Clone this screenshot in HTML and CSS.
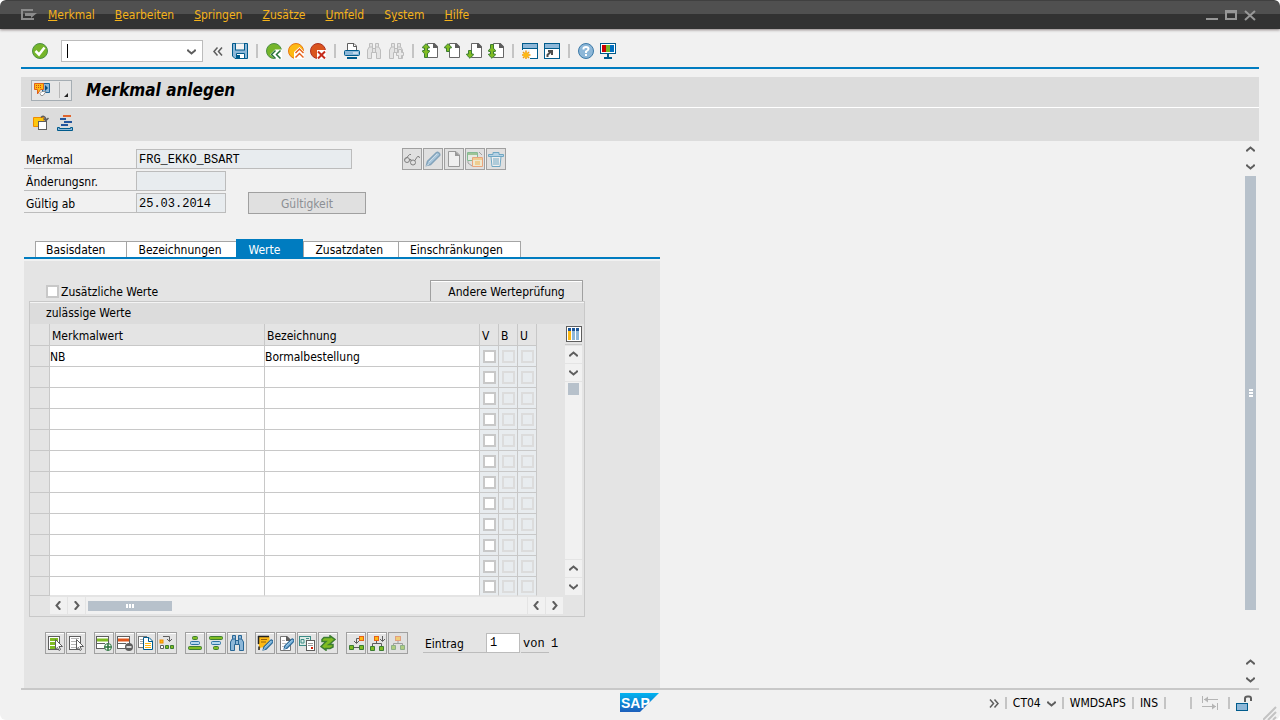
FILE: index.html
```html
<!DOCTYPE html>
<html lang="de">
<head>
<meta charset="UTF-8">
<title>Merkmal anlegen</title>
<link rel="stylesheet" href="styles.css">
</head>
<body>

<!-- shared icon shapes -->
<svg class="sprite" aria-hidden="true">
  <symbol id="up" viewBox="0 0 9 9"><path d="M1 6.5V5.5L4.5 2.5L8 5.5V6.5" fill="none" stroke="#5e5e5e" stroke-width="2"/></symbol>
  <symbol id="down" viewBox="0 0 9 9"><path d="M1 2.5V3.5L4.5 6.5L8 3.5V2.5" fill="none" stroke="#5e5e5e" stroke-width="2"/></symbol>
  <symbol id="left" viewBox="0 0 9 9"><path d="M6.5 1H5.5L2.5 4.5L5.5 8H6.5" fill="none" stroke="#5e5e5e" stroke-width="2"/></symbol>
  <symbol id="right" viewBox="0 0 9 9"><path d="M2.5 1H3.5L6.5 4.5L3.5 8H2.5" fill="none" stroke="#5e5e5e" stroke-width="2"/></symbol>
  <symbol id="page" viewBox="0 0 16 16">
    <path d="M5.500 .5H12L15.500 4V14.500H5.500Z" fill="#fff" stroke="#666"/>
    <path d="M11 0H12.500L16 3.500V5H11Z" fill="#5e5e5e"/>
  </symbol>
  <symbol id="arrow" viewBox="0 0 8 9">
    <path d="M4 .7L7.300 4V5H5.500V8.500H2.500V5H.7V4Z" fill="#80bc22" stroke="#3c7d32"/>
  </symbol>
  <symbol id="bothways" viewBox="0 0 8 16">
    <path d="M4 .7L7.300 4V5H5.500V7.500H7.300V9L5.500 10.500V14.500H2.500V10.500L.7 9V7.500H2.500V5H.7V4Z" fill="#80bc22" stroke="#3c7d32"/>
  </symbol>
  <symbol id="binoculars" viewBox="0 0 16 16">
    <path d="M3.500 .5H6.500V5.500H9.500V.5H12.500V3.500L14.500 7V15.500H10.500V9.500H5.500V15.500H1.500V7L3.500 3.500Z" fill="var(--fill)" stroke="var(--line)"/>
    <path d="M3 4H6.500M9.500 4H13M6.500 5V9M9.500 5V9" stroke="var(--line)"/>
  </symbol>
  <symbol id="window" viewBox="0 0 16 16">
    <rect x=".5" y=".5" width="15" height="15" fill="#fff" stroke="#005b8c"/>
    <rect x="1" y="1" width="14" height="4" fill="#8db7d8"/>
    <path d="M0 5.500H16" stroke="#005b8c"/>
  </symbol>
  <symbol id="list" viewBox="0 0 16 16">
    <rect x="1.500" y="1.500" width="11" height="13" fill="#fff" stroke="#5e5e5e"/>
  </symbol>
  <symbol id="pencil" viewBox="0 0 16 16">
    <path d="M1.500 14.500L2.500 10.500L11.500 1.500C13 .5 15.500 3 14.500 4.500L5.500 13.500Z" fill="#75b0d9" stroke="#286796" stroke-width="1.500"/>
    <path d="M4 11L12 3M1.500 14.500L4 13" stroke="#c2def0"/>
  </symbol>
</svg>

<header class="menubar">
  <button class="sysmenu" aria-label="Systemmenü">
    <svg width="16" height="12" viewBox="0 0 16 12"><path d="M12 1H1V10H12V9" fill="none" stroke="#8b8b8b" stroke-width="2"/><path d="M4 4H16L10 9V7H4Z" fill="#8b8b8b"/></svg>
  </button>
  <nav class="menus">
    <button><u>M</u>erkmal</button>
    <button><u>B</u>earbeiten</button>
    <button><u>S</u>pringen</button>
    <button><u>Z</u>usätze</button>
    <button><u>U</u>mfeld</button>
    <button>S<u>y</u>stem</button>
    <button><u>H</u>ilfe</button>
  </nav>
  <div class="winctl">
    <button aria-label="Minimieren"><svg width="12" height="12" viewBox="0 0 12 12"><path d="M0 10H12" stroke="#979797" stroke-width="2"/></svg></button>
    <button aria-label="Maximieren"><svg width="12" height="12" viewBox="0 0 12 12"><path d="M0 2H12M0 10H12M1 2V11M11 2V11" stroke="#979797" stroke-width="2"/><path d="M0 1H12V4H0Z" fill="#979797"/></svg></button>
    <button aria-label="Schließen"><svg width="12" height="12" viewBox="0 0 12 12"><path d="M1 2L11 11M11 2L1 11" stroke="#979797" stroke-width="2"/></svg></button>
  </div>
</header>

<div class="toolbar">
  <button aria-label="Weiter"><svg class="icon" viewBox="0 0 16 16"><circle cx="8" cy="8" r="7.500" fill="#76b52a" stroke="#4d8f45"/><path d="M3.500 8L7 11.500L12.500 4.500" fill="none" stroke="#fff" stroke-width="2.500"/></svg></button>
  <div class="command">
    <input type="text" aria-label="Befehl">
    <button aria-label="Befehlsliste"><svg class="chev" viewBox="0 0 9 9"><use href="#down"/></svg></button>
  </div>
  <button class="collapse" aria-label="Einklappen"><svg width="10" height="9" viewBox="0 0 10 9"><path d="M4.500 .5L1 4.500L4.500 8.500M9 .5L5.500 4.500L9 8.500" fill="none" stroke="#5e5e5e" stroke-width="1.500"/></svg></button>
  <button aria-label="Sichern"><svg class="icon" viewBox="0 0 16 16"><path d="M.5 .5H15.500V15.500H3L.5 13Z" fill="#8db7d8" stroke="#005b8c"/><rect x="3.500" y="0" width="9" height="7" fill="#f4f4f4" stroke="#005b8c"/><path d="M4.500 15V10.500H12.500V15" fill="#fff" stroke="#005b8c"/><path d="M5 12H8V15H5Z" fill="#005b8c"/></svg></button>
  <i class="sep"></i>
  <button aria-label="Zurück"><svg class="icon" viewBox="0 0 16 16"><circle cx="8" cy="8" r="7.500" fill="#76b52a" stroke="#4d8f45"/><path d="M4 11.500L9 6.500H16V16H9Z" fill="#fff"/><path d="M9.500 7.500L5.500 11.500L9.500 15.500M14.500 7.500L10.500 11.500L14.500 15.500" fill="none" stroke="#27713a" stroke-width="1.500"/></svg></button>
  <button aria-label="Beenden"><svg class="icon" viewBox="0 0 16 16"><circle cx="8" cy="8" r="7.500" fill="#fdb913" stroke="#e87511"/><path d="M6 9L11.500 4L16 8.500V16H6Z" fill="#fff"/><path d="M7.500 10L11.500 6L15.500 10M7.500 14.500L11.500 10.500L15.500 14.500" fill="none" stroke="#e5601b" stroke-width="1.500"/></svg></button>
  <button aria-label="Abbrechen"><svg class="icon" viewBox="0 0 16 16"><circle cx="8" cy="8" r="7.500" fill="#d9541e" stroke="#ad3022"/><path d="M7 7H16V16H7Z" fill="#fff"/><path d="M8 8.500L15 15.500M15 8.500L8 15.500" stroke="#c52b1c" stroke-width="2"/></svg></button>
  <i class="sep"></i>
  <button aria-label="Drucken"><svg class="icon" viewBox="0 0 16 16"><path d="M3.500 7V.5H10L12.500 3V7" fill="#fff" stroke="#5e5e5e"/><path d="M9.500 1V3.500H12" fill="none" stroke="#5e5e5e"/><rect x=".5" y="7.500" width="15" height="5" rx="1" fill="#8db7d8" stroke="#005b8c"/><path d="M9 10H14" stroke="#fff"/><path d="M3 15H13" stroke="#005b8c" stroke-width="2"/></svg></button>
  <button aria-label="Suchen" disabled><svg class="icon gray" viewBox="0 0 16 16"><use href="#binoculars"/></svg></button>
  <button aria-label="Weitersuchen" disabled><svg class="icon gray" viewBox="0 0 16 16"><use href="#binoculars"/><path d="M10.500 6.500H13.500V9.500H15.500V12.500H13.500V15.500H10.500V12.500H8.500V9.500H10.500Z" fill="#e9e9e9" stroke="#bdbdbd"/></svg></button>
  <i class="sep"></i>
  <button aria-label="Erste Seite"><svg class="icon" viewBox="0 0 16 16"><use href="#page" width="16" height="16"/><use href="#bothways" width="8" height="16"/></svg></button>
  <button aria-label="Vorige Seite"><svg class="icon" viewBox="0 0 16 16"><use href="#page" width="16" height="16"/><use href="#arrow" width="8" height="9"/></svg></button>
  <button aria-label="Nächste Seite"><svg class="icon" viewBox="0 0 16 16"><use href="#page" width="16" height="16"/><use href="#arrow" width="8" height="9" transform="translate(0 16) scale(1 -1)"/></svg></button>
  <button aria-label="Letzte Seite"><svg class="icon" viewBox="0 0 16 16"><use href="#page" width="16" height="16"/><use href="#bothways" width="8" height="16" transform="translate(0 16) scale(1 -1)"/></svg></button>
  <i class="sep"></i>
  <button aria-label="Neuer Modus"><svg class="icon" viewBox="0 0 16 16"><use href="#window"/><path d="M0 7H8V16H0Z" fill="#f1f1f1"/><path d="M4 7.500V16M0 12H8.500M1 9L7 15M7 9L1 15" stroke="#f39c12" stroke-width="1.500"/><circle cx="4" cy="12" r="2.500" fill="#fdb913"/></svg></button>
  <button aria-label="Verknüpfung"><svg class="icon" viewBox="0 0 16 16"><use href="#window"/><path d="M3.500 14V12L7 8.500M4 8H8V12" fill="none" stroke="#4d4d4d" stroke-width="2"/></svg></button>
  <i class="sep"></i>
  <button aria-label="Hilfe"><svg class="icon" viewBox="0 0 16 16"><circle cx="8" cy="8" r="7.500" fill="#8db7d8" stroke="#3c7aa8"/><path d="M5.500 6.500V5.500Q5.500 4 8 4T10.500 6Q10.500 7 8 8.500V10" fill="none" stroke="#fff" stroke-width="2"/><path d="M7 11H9V13H7Z" fill="#fff"/></svg></button>
  <button aria-label="Layout anpassen"><svg class="icon" viewBox="0 0 16 16"><rect x=".5" y=".5" width="15" height="10" fill="#fff" stroke="#005b8c"/><path d="M2 2H6V9H2Z" fill="#c00"/><path d="M6 2H10V9H6Z" fill="#76b52a"/><path d="M10 2H14V9H10Z" fill="#0070c0"/><path d="M7 11H9V14H7ZM4 14H12V16H4Z" fill="#005b8c"/></svg></button>
</div>

<div class="titlebar">
  <button class="services" aria-label="Dienste zum Objekt">
    <svg class="icon" viewBox="0 0 16 16"><path d="M8.500 1.500H15.500V10.500H8.500Z" fill="#8db7d8" stroke="#1d6499"/><path d="M11 3L14 6L11 9Z" fill="#0a4b7c"/><path d="M.5 1.500H9.500V7.500H6.500L3.500 12V7.500H.5Z" fill="#fdb913" stroke="#e0601a"/><path d="M2 3.500H8M2 5.500H8" stroke="#d2421b" stroke-dasharray="1 1"/><path d="M6 11.500L8 9.500H12L9 13.500H7Z" fill="#fff" stroke="#777" stroke-width=".7"/></svg>
    <svg class="corner" width="10" height="16" viewBox="0 0 10 16"><path d="M.5 0V16" stroke="#b8b8b8"/><path d="M9 11V15H5Z" fill="#222"/></svg>
  </button>
  <h1>Merkmal anlegen</h1>
</div>
<div class="apptools">
  <button aria-label="Kopieren"><svg class="icon" viewBox="0 0 16 16"><path d="M.5 2.500H11V11.500H.5Z" fill="#fdc70e" stroke="#f08a00"/><rect x="5.500" y="6.500" width="8" height="8" fill="#fff" stroke="#5e5e5e"/><path d="M8 2.500Q11 -.5 13 4M10.500 3.500L13 5.500L15.500 3" fill="none" stroke="#5e5e5e" stroke-width="1.500"/></svg></button>
  <button aria-label="Klassenhierarchie"><svg class="icon" viewBox="0 0 16 16"><path d="M6 1H14" stroke="#e0642c" stroke-width="2"/><path d="M3 4H9M7 7H15M4 10H11" stroke="#23559c" stroke-width="2"/><path d="M.5 12.500H2.500V13.500H13.500V12.500H15.500V15.500H.5Z" fill="#8db7d8" stroke="#005b8c"/></svg></button>
</div>

<main>
  <div class="content">
    <div class="form">
      <div class="row">
        <label for="merkmal">Merkmal</label><input class="long" id="merkmal" value="FRG_EKKO_BSART" readonly>
        <div class="group modes">
          <button class="tool" disabled aria-label="Anzeigen"><svg class="icon" viewBox="0 0 16 16"><g fill="none" stroke="#222"><path d="M1 8.500L5.500 3.500H7M10.500 10L13.500 5.500H15L15.500 7"/><circle cx="3" cy="9" r="2.500"/><circle cx="9" cy="11.500" r="2.500"/><path d="M5 8.500H7V10"/></g></svg></button>
          <button class="tool" disabled aria-label="Ändern"><svg class="icon" viewBox="0 0 16 16"><use href="#pencil"/></svg></button>
          <button class="tool" disabled aria-label="Anlegen"><svg class="icon" viewBox="0 0 16 16"><path d="M2.500 .5H10L13.500 4V15.500H2.500Z" fill="#fff" stroke="#555"/><path d="M9 0L14 5H9Z" fill="#555"/></svg></button>
          <button class="tool" disabled aria-label="Anlegen mit Vorlage"><svg class="icon" viewBox="0 0 16 16"><path d="M.5 1.500H10.500V9.500H.5Z" fill="#eaf5e5" stroke="#2b9348"/><path d="M1 2H10V4H1Z" fill="#5faa4e"/><path d="M12 1L15 4M1 10V12L5 15" fill="none" stroke="#666"/><path d="M5.500 6.500H15.500V15.500H5.500Z" fill="#fff0c0" stroke="#f26a1b"/><path d="M6 8H15M8 11H13M8 13H13" stroke="#fbab18" stroke-width="1.500"/></svg></button>
          <button class="tool" disabled aria-label="Löschen"><svg class="icon" viewBox="0 0 16 16"><path d="M3 5.500H13L12 15.500H4Z" fill="#fff" stroke="#0070a8"/><path d="M6 7V14M8 7V14M10 7V14" stroke="#0070a8"/><path d="M.5 3.500H5V1.500H11V3.500H15.500V5.500H.5Z" fill="#8cc6ea" stroke="#0070a8"/></svg></button>
        </div>
      </div>
      <div class="row">
        <label for="aenderung">Änderungsnr.</label><input id="aenderung" readonly>
      </div>
      <div class="row">
        <label for="gueltig">Gültig ab</label><input id="gueltig" value="25.03.2014" readonly>
        <button class="push validity" disabled>Gültigkeit</button>
      </div>
    </div>

    <div class="tabs" role="tablist">
      <button role="tab">Basisdaten</button>
      <button role="tab">Bezeichnungen</button>
      <button role="tab" class="active" aria-selected="true">Werte</button>
      <button role="tab">Zusatzdaten</button>
      <button role="tab">Einschränkungen</button>
    </div>

    <section class="panel">
      <div class="panelhead">
        <label class="check"><input type="checkbox">Zusätzliche Werte</label>
        <button class="push other">Andere Werteprüfung</button>
      </div>

      <div class="box">
        <h2>zulässige Werte</h2>
        <div class="gridwrap">
          <table>
            <colgroup><col class="sel"><col><col><col class="flag"><col class="flag"><col class="flag"></colgroup>
            <thead>
              <tr><th></th><th>Merkmalwert</th><th>Bezeichnung</th><th>V</th><th>B</th><th>U</th></tr>
            </thead>
            <tbody id="werte"></tbody>
          </table>
          <div class="vscroll">
            <button class="config" aria-label="Konfiguration"><svg width="16" height="16" viewBox="0 0 16 16"><rect x=".5" y=".5" width="15" height="15" fill="#fff" stroke="#5e5e5e"/><path d="M2 2H5V5H2ZM6 2H9V5H6ZM10 2H13V5H10Z" fill="#1d5799"/><path d="M2 5H5V14H2Z" fill="#fdb913"/><path d="M6 5H9V14H6ZM10 5H13V14H10Z" fill="#8db7d8"/></svg></button>
            <button aria-label="Nach oben"><svg class="chev" viewBox="0 0 9 9"><use href="#up"/></svg></button>
            <button aria-label="Nach unten"><svg class="chev" viewBox="0 0 9 9"><use href="#down"/></svg></button>
            <div class="track"><div class="thumb"></div></div>
            <button aria-label="Nach oben"><svg class="chev" viewBox="0 0 9 9"><use href="#up"/></svg></button>
            <button aria-label="Nach unten"><svg class="chev" viewBox="0 0 9 9"><use href="#down"/></svg></button>
          </div>
        </div>
        <div class="hscroll">
          <button aria-label="Nach links"><svg class="chev" viewBox="0 0 9 9"><use href="#left"/></svg></button>
          <button aria-label="Nach rechts"><svg class="chev" viewBox="0 0 9 9"><use href="#right"/></svg></button>
          <div class="track"><div class="thumb"><i></i><i></i><i></i></div></div>
          <button aria-label="Nach links"><svg class="chev" viewBox="0 0 9 9"><use href="#left"/></svg></button>
          <button aria-label="Nach rechts"><svg class="chev" viewBox="0 0 9 9"><use href="#right"/></svg></button>
        </div>
      </div>

      <div class="tabletools">
        <div class="group">
          <button class="tool" aria-label="Alle markieren"><svg class="icon" viewBox="0 0 16 16"><use href="#list"/><path d="M3 4.500H11M3 8.500H8M3 12.500H9" stroke="#80bc22" stroke-width="3"/><path d="M8.500 4.500L15.500 11.500H12L13.500 14.500L12 15.500L10.500 12.500L8.500 14Z" fill="#fff" stroke="#5e5e5e"/></svg></button>
          <button class="tool" aria-label="Markierung löschen"><svg class="icon" viewBox="0 0 16 16"><use href="#list"/><path d="M3 3.500H11M3 6.500H8M3 9.500H8M3 12.500H8" stroke="#b5b5b5"/><path d="M8.500 4.500L15.500 11.500H12L13.500 14.500L12 15.500L10.500 12.500L8.500 14Z" fill="#fff" stroke="#5e5e5e"/></svg></button>
        </div>
        <div class="group">
          <button class="tool" aria-label="Zeile einfügen"><svg class="icon" viewBox="0 0 16 16"><rect x=".5" y="1.500" width="12" height="12" fill="#fff" stroke="#5e5e5e"/><path d="M1 5H12" stroke="#80bc22" stroke-width="3"/><path d="M0 8.500H9" stroke="#5e5e5e"/><circle cx="12" cy="12" r="3.500" fill="#fff" stroke="#27713a"/><path d="M12 9V15M9 12H15" stroke="#27713a" stroke-width="1.500"/></svg></button>
          <button class="tool" aria-label="Zeile löschen"><svg class="icon" viewBox="0 0 16 16"><rect x=".5" y="1.500" width="12" height="12" fill="#fff" stroke="#5e5e5e"/><path d="M1 5H12" stroke="#e0571c" stroke-width="3"/><path d="M0 8.500H9" stroke="#5e5e5e"/><circle cx="12" cy="12" r="4" fill="#5e5e5e"/><path d="M9.500 12H14.500" stroke="#fff" stroke-width="1.500"/></svg></button>
          <button class="tool" aria-label="Zeile kopieren"><svg class="icon" viewBox="0 0 16 16"><rect x=".5" y="1.500" width="8" height="11" fill="#fff" stroke="#777"/><path d="M2 4.500H5M2 6.500H5M2 8.500H5" stroke="#aaa"/><path d="M5.500 2.500H11L14.500 6V14.500H5.500Z" fill="#fff" stroke="#005b8c"/><path d="M10.500 3V6.500H14" fill="none" stroke="#005b8c"/><path d="M7 8.500H13M7 10.500H13M7 12.500H13" stroke="#fdb913"/></svg></button>
          <button class="tool" aria-label="Umordnen"><svg class="icon" viewBox="0 0 16 16"><rect x="1" y="5" width="3" height="3" fill="#fdb913" stroke="#f08a00"/><path d="M4 1.500H10.500V6M8 4L10.500 6.500L13 4" fill="none" stroke="#5e5e5e"/><path d="M1.500 10.500H4.500V13.500H1.500Z" fill="#fff" stroke="#5e5e5e"/><path d="M6.500 10.500H9.500V13.500H6.500ZM11.500 10.500H14.500V13.500H11.500Z" fill="#80bc22" stroke="#3c7d32"/></svg></button>
        </div>
        <div class="group">
          <button class="tool" aria-label="Aufsteigend sortieren"><svg class="icon" viewBox="0 0 16 16"><rect x="5.500" y="1.500" width="5" height="3" rx="1" fill="#80bc22" stroke="#3c7d32"/><rect x="3.500" y="6.500" width="9" height="3" rx="1" fill="#b6d8ed" stroke="#2b73a5"/><rect x="1.500" y="11.500" width="13" height="3" rx="1" fill="#80bc22" stroke="#3c7d32"/></svg></button>
          <button class="tool" aria-label="Absteigend sortieren"><svg class="icon" viewBox="0 0 16 16"><rect x="1.500" y="1.500" width="13" height="3" rx="1" fill="#80bc22" stroke="#3c7d32"/><rect x="3.500" y="6.500" width="9" height="3" rx="1" fill="#b6d8ed" stroke="#2b73a5"/><rect x="5.500" y="11.500" width="5" height="3" rx="1" fill="#80bc22" stroke="#3c7d32"/></svg></button>
          <button class="tool" aria-label="Wert suchen"><svg class="icon blue" viewBox="0 0 16 16"><use href="#binoculars"/></svg></button>
        </div>
        <div class="group">
          <button class="tool" aria-label="Langtext"><svg class="icon" viewBox="0 0 16 16"><path d="M1.500 1.500H12.500V8.500L8 12.500H4L2 14.500V9.500H1Z" fill="#fdb913"/><path d="M1 1.500H12M1.500 1V9M2 11.500V15" stroke="#222" stroke-width="1.500"/><path d="M4 4.500H10M4 7H9" stroke="#9a6408"/><use href="#pencil" x="5" y="4" width="12" height="12"/></svg></button>
          <button class="tool" aria-label="Bezeichnungen ändern"><svg class="icon" viewBox="0 0 16 16"><path d="M2.500 1.500H9L12.500 5V15.500H2.500Z" fill="#fff" stroke="#777"/><path d="M8 1H9L13 5V6H8Z" fill="#5e5e5e"/><path d="M4 5.500H7M4 8.500H8M4 11.500H7" stroke="#bbb"/><use href="#pencil" x="5" y="3" width="12" height="12"/></svg></button>
          <button class="tool" aria-label="Dokumente"><svg class="icon" viewBox="0 0 16 16"><rect x=".5" y="1.500" width="11" height="9" fill="#ddebe6" stroke="#3c8c86"/><path d="M2 4.500H5V8H2ZM7 3.500H10M7 5.500H10" fill="none" stroke="#3c8c86"/><rect x="7.500" y="5.500" width="8" height="10" fill="#fff" stroke="#5e5e5e"/><path d="M9 8.500H14M9 10.500H14" stroke="#999"/><path d="M12 12H14V14H12Z" fill="#d81e05"/></svg></button>
          <button class="tool" aria-label="Wechseln"><svg class="icon" viewBox="0 0 16 16"><path d="M2 4.500L4 2.500H10V.8L15 4.500L10.500 8.500L9 9.500H13V12L10 13.500H6V15.200L1 11.500L5 7.500L6 6.500H2Z" fill="#80bc22" stroke="#3c7d32" stroke-width="1.500"/></svg></button>
        </div>
        <div class="group">
          <button class="tool" aria-label="Ebene tiefer"><svg class="icon" viewBox="0 0 16 16"><rect x="11.500" y="1.500" width="4" height="4" fill="#fdb913" stroke="#e5601b"/><path d="M11 3.500H8.500V8M6 6L8.500 8.500L11 6M5 12.500H11" fill="none" stroke="#5e5e5e"/><path d="M1.500 10.500H5.500V14.500H1.500ZM11.500 10.500H15.500V14.500H11.500Z" fill="#80bc22" stroke="#3c7d32"/></svg></button>
          <button class="tool" aria-label="Hierarchie"><svg class="icon" viewBox="0 0 16 16"><path d="M3.500 11V8.500H12.500V11M7.500 5V8.500M13.500 1V6M11 4L13.500 6.500L16 4" fill="none" stroke="#5e5e5e"/><rect x="5.500" y="1.500" width="4" height="4" fill="#fdb913" stroke="#e5601b"/><path d="M1.500 11.500H5.500V15.500H1.500ZM10.500 11.500H14.500V15.500H10.500Z" fill="#80bc22" stroke="#3c7d32"/></svg></button>
          <button class="tool" disabled aria-label="Hierarchie löschen"><svg class="icon" viewBox="0 0 16 16"><path d="M3.500 11V8.500H12.500V11M8 5V8.500" fill="none" stroke="#5e5e5e"/><rect x="5.500" y="1.500" width="5" height="4" fill="#fdb913" stroke="#e5601b"/><path d="M1.500 10.500H5.500V14.500H1.500ZM10.500 10.500H14.500V14.500H10.500Z" fill="#80bc22" stroke="#3c7d32"/></svg></button>
        </div>
        <div class="entry">
          <label for="eintrag">Eintrag</label><input id="eintrag" value="1"><span class="of">von</span><span class="total">1</span>
        </div>
      </div>
    </section>
  </div>

  <div class="pagescroll">
    <button aria-label="Nach oben"><svg class="chev" viewBox="0 0 9 9"><use href="#up"/></svg></button>
    <button aria-label="Nach unten"><svg class="chev" viewBox="0 0 9 9"><use href="#down"/></svg></button>
    <div class="track"><div class="thumb"><i></i><i></i><i></i></div></div>
    <button aria-label="Nach oben"><svg class="chev" viewBox="0 0 9 9"><use href="#up"/></svg></button>
    <button aria-label="Nach unten"><svg class="chev" viewBox="0 0 9 9"><use href="#down"/></svg></button>
  </div>
</main>

<footer>
  <svg class="logo" width="39" height="19" viewBox="0 0 39 19" role="img" aria-label="SAP">
    <defs><linearGradient id="sap" x2="0" y2="1"><stop offset="0" stop-color="#00b3f0"/><stop offset="1" stop-color="#1e5fbb"/></linearGradient></defs>
    <path d="M0 0H39L20 19H0Z" fill="url(#sap)"/>
    <text x="1" y="15">SAP</text>
  </svg>
  <div class="status">
    <svg class="more" width="10" height="9" viewBox="0 0 10 9"><path d="M1 .5L4.500 4.500L1 8.500M5.500 .5L9 4.500L5.500 8.500" fill="none" stroke="#5e5e5e" stroke-width="1.500"/></svg>
    <i class="sep"></i>
    <button>CT04 <svg class="chev" viewBox="0 0 9 9"><use href="#down"/></svg></button>
    <i class="sep"></i>
    <span>WMDSAPS</span>
    <i class="sep"></i>
    <span>INS</span>
    <i class="sep"></i>
    <span class="empty"></span>
    <i class="sep"></i>
    <svg class="icon tabkey" viewBox="0 0 16 16"><path d="M.5 1V8M15.500 8V15M2 4.500H16M0 11.500H14" stroke="#b5b5b5"/><path d="M6 1.500L2 4.500L6 7.500ZM10 8.500L14 11.500L10 14.500Z" fill="#b5b5b5"/></svg>
    <i class="sep"></i>
    <svg class="icon" viewBox="0 0 16 16"><path d="M9 7V3.500Q9 1.500 11.500 1.500H13Q15 1.500 15 3.500V6" fill="none" stroke="#5e5e5e" stroke-width="2"/><rect x=".5" y="8.500" width="11" height="7" fill="#8db7d8" stroke="#005b8c"/></svg>
  </div>
  <svg class="grip" width="14" height="14" viewBox="0 0 14 14"><path d="M0 14L13 1M5 14L13 6M10 14L13 11" stroke="#c3c3c3" stroke-width="2"/></svg>
</footer>

<script>
// Wertetabelle aufbauen
const werte = [['NB', 'Bormalbestellung']];
const tbody = document.getElementById('werte');

for (let i = 0; i < 12; i++) {
  const [wert, bez] = werte[i] || ['', ''];
  const tr = document.createElement('tr');
  tr.innerHTML =
    '<td></td>' +
    `<td><input type="text" aria-label="Merkmalwert ${i + 1}" value="${wert}"></td>` +
    `<td><input type="text" aria-label="Bezeichnung ${i + 1}" value="${bez}"></td>` +
    '<td><input type="checkbox" aria-label="V"></td>' +
    '<td><input type="checkbox" aria-label="B" disabled></td>' +
    '<td><input type="checkbox" aria-label="U" disabled></td>';
  tbody.appendChild(tr);
}
</script>
</body>
</html>
```

FILE: styles.css
```css
* {
  box-sizing: border-box;
}
html {
  background: #fff;
}
body {
  margin: 0;
  min-height: 100vh;
  display: flex;
  flex-direction: column;
  background: #f1f1f1;
  border-radius: 6px;
  font: 12px/16px "DejaVu Sans Condensed", "DejaVu Sans", sans-serif;
  color: #000;
}
button, input {
  font: inherit;
  color: inherit;
  margin: 0;
  padding: 0;
  border: 0;
  background: none;
  border-radius: 0;
}
button {
  white-space: nowrap;
}
svg {
  display: block;
  flex: none;
}
.sprite {
  display: none;
}
.icon {
  width: 16px;
  height: 16px;
}
.chev {
  width: 9px;
  height: 9px;
}
.gray {
  --fill: #e4e4e4;
  --line: #bdbdbd;
}
.blue {
  --fill: #8db7d8;
  --line: #286796;
}
.sep {
  width: 2px;
  height: 14px;
  background: #c4c4c4;
}

/* menu bar */
.menubar {
  display: flex;
  align-items: center;
  height: 29px;
  padding: 0 24px 0 21px;
  border-radius: 5px 5px 0 0;
  border-top: 1px solid #404040;
  background: linear-gradient(#505050 13px, #323232 13px);
  box-shadow: 0 1px 3px #8a8080;
}
.menus {
  display: flex;
  gap: 20px;
  margin-left: 11px;
  color: #f5b31b;
}
.winctl {
  display: flex;
  gap: 7px;
  margin-left: auto;
}

/* system toolbar */
.toolbar {
  display: flex;
  align-items: center;
  gap: 6px;
  height: 40px;
  margin: 0 21px;
  padding: 6px 11px 0;
  border-bottom: 2px solid #007cc0;
}
.toolbar .sep {
  margin: 0 2px;
}
.command {
  position: relative;
  display: flex;
  align-items: center;
  width: 142px;
  height: 22px;
  margin-left: 7px;
  padding: 0 6px 0 5px;
  border: 1px solid #bcbcbc;
  background: #fff;
}
.command::before {
  content: "";
  width: 1px;
  height: 14px;
  background: #000;
}
.command input {
  flex: 1;
  min-width: 0;
  outline: 0;
}
.collapse {
  margin: 0 3px 0 4px;
}

/* title and application toolbar */
.titlebar, .apptools {
  display: flex;
  align-items: center;
  margin: 0 21px;
  padding: 0 10px;
  background: #dcdcdc;
}
.titlebar {
  height: 31px;
  margin-top: 8px;
  padding-bottom: 4px;
  border-bottom: 1px solid #fff;
}
.services {
  display: flex;
  justify-content: space-between;
  width: 41px;
  height: 21px;
  padding: 1px 2px;
  border: 1px solid #a5adb3;
  background: #e6e6e6;
}
.titlebar h1 {
  margin: 0 0 0 14px;
  font-size: 17px;
  line-height: 20px;
  font-style: italic;
}
.apptools {
  height: 33px;
  gap: 8px;
  padding: 0 12px 4px;
}

main {
  flex: 1;
  display: flex;
  justify-content: space-between;
  margin: 0 21px;
  border-bottom: 2px solid #c8c8c8;
}
.content {
  display: flex;
  flex-direction: column;
  width: 50%;
  min-width: 639px;
  padding-left: 3px;
}

/* header form */
.form {
  display: grid;
  gap: 2px;
  padding-top: 8px;
}
.row, .group {
  display: flex;
}
.row {
  height: 20px;
}
.row label {
  width: 112px;
  padding: 3px 2px 0;
  border-bottom: 1px solid #bcbcbc;
}
.row input {
  width: 90px;
  padding: 2px 2px 0;
  border: 1px solid #bcbcbc;
  background: #e8ecef;
  font-family: "Liberation Mono", monospace;
}
.row .long {
  width: 216px;
}
.group {
  gap: 1px;
}
.modes {
  margin: -1px 0 -1px 50px;
}
.tool {
  width: 20px;
  height: 22px;
  padding: 1px;
  border: 1px solid #a0a0a0;
  background: #e4e4e4;
  box-shadow: inset 0 1px #fff;
}
.tool:disabled {
  box-shadow: none;
  background: #e0e0e0;
}
.tool:disabled svg {
  opacity: 0.5;
}
.push {
  height: 22px;
  padding: 2px 14px 0;
  border: 1px solid #a0a0a0;
  background: #e4e4e4;
  box-shadow: inset 0 1px #fff;
}
.push:disabled {
  color: #8c8f94;
  background: #e0e0e0;
  box-shadow: none;
}
.validity {
  width: 118px;
  margin: -1px 0 -1px 22px;
}
.other {
  width: 153px;
}

/* tabs */
.tabs {
  display: flex;
  align-items: flex-end;
  margin-top: 26px;
  padding-left: 11px;
  border-bottom: 2px solid #007cc0;
}
.tabs button {
  height: 16px;
  padding: 0 15px 0 11px;
  border: 1px solid #a5a5a5;
  border-width: 1px 0 0 1px;
  background: #fff;
  line-height: 16px;
}
.tabs button:first-child {
  padding: 0 21px 0 10px;
}
.tabs button:last-child {
  padding-right: 17px;
  border-right-width: 1px;
}
.tabs .active {
  height: 18px;
  padding: 2px 23px 0 11px;
  border-color: #007cc0;
  background: #007cc0;
  color: #fff;
}

.panel {
  flex: 1;
  margin-top: 2px;
  padding: 19px 0 34px 5px;
  background: #e4e4e4;
}
.panelhead {
  display: flex;
  justify-content: space-between;
  width: 554px;
  height: 21px;
  padding-left: 17px;
}
.check {
  display: flex;
  align-items: center;
  gap: 2px;
  padding-top: 2px;
}
input[type="checkbox"] {
  appearance: none;
  display: block;
  width: 13px;
  height: 13px;
  border: 2px solid #c8c8c8;
  background: #fff;
}
input[type="checkbox"]:disabled {
  border-color: #dcdcdc;
  background: #e8ecef;
}

/* value table */
.box {
  position: relative;
  width: 556px;
  border: 1px solid #c8c8c8;
  background: #e4e4e4;
}
.box h2 {
  margin: 0;
  padding: 2px 0 2px 16px;
  border-top: 1px solid #f4f4f4;
  background: #dcdcdc;
  font-size: 12px;
  font-weight: normal;
  height: 22px;
}
.gridwrap {
  display: flex;
  justify-content: space-between;
  padding-right: 2px;
}
table {
  width: 507px;
  table-layout: fixed;
  border-spacing: 0;
}
col.sel {
  width: 20px;
}
col.flag {
  width: 19px;
}
th, td {
  padding: 0;
  border: 1px solid #c8c8c8;
  border-width: 0 1px 1px 0;
  height: 21px;
}
th {
  height: 22px;
  padding: 2px 0 0 2px;
  font-weight: normal;
  text-align: left;
}
td:nth-child(2), td:nth-child(3) {
  background: #fff;
}
td:nth-child(n+4) {
  background: #e8ecef;
}
td input[type="text"] {
  display: block;
  width: 100%;
  height: 20px;
  padding-top: 2px;
}
td input[type="checkbox"] {
  margin-left: 3px;
}
tr:last-child td {
  height: 19px;
}
tr:last-child td input[type="text"] {
  height: 18px;
}
tbody tr:last-child td:not(:first-child) {
  border-bottom-color: #e4e4e4;
}
.vscroll, .hscroll {
  display: flex;
  gap: 1px;
}
.vscroll {
  flex-direction: column;
  width: 17px;
  padding-bottom: 1px;
}
.vscroll button, .hscroll button {
  display: grid;
  place-items: center;
  width: 17px;
  height: 17px;
  background: #f1f1f1;
}
.vscroll .config {
  height: 21px;
  background: none;
  border-bottom: 1px solid #c8c8c8;
}
.track {
  flex: 1;
  background: #f1f1f1;
}
.thumb {
  display: flex;
  align-items: center;
  justify-content: center;
  gap: 1px;
  background: #b7c1cb;
}
.thumb i {
  width: 2px;
  height: 4px;
  background: #fff;
}
.vscroll .thumb {
  height: 12px;
  margin: 1px 3px;
}
.hscroll {
  padding: 1px 21px 2px 20px;
}
.hscroll .thumb {
  width: 84px;
  height: 10px;
  margin: 4px 2px 3px;
}

/* table toolbar */
.tabletools {
  display: flex;
  gap: 8px;
  padding: 15px 0 0 16px;
}
.entry {
  display: flex;
  height: 20px;
  margin: 1px 0 0 7px;
}
.entry label, .of {
  padding: 3px 2px 0;
  border-bottom: 1px solid #bcbcbc;
}
.entry label {
  width: 63px;
}
.entry input {
  width: 34px;
  padding: 0 3px;
  border: 1px solid #bcbcbc;
  background: #fff;
}
.entry input, .of, .total {
  font-family: "Liberation Mono", monospace;
}
.of {
  width: 28px;
  margin-left: 1px;
}
.total {
  padding: 3px 2px 0;
}

/* page scrollbar */
.pagescroll {
  display: flex;
  flex-direction: column;
  align-items: center;
  width: 11px;
  margin-right: 3px;
}
.pagescroll button {
  display: grid;
  place-items: center;
  width: 11px;
  height: 17px;
}
.pagescroll .track {
  display: flex;
  width: 11px;
  margin: 1px 0 44px;
}
.pagescroll .thumb {
  flex: 1;
  flex-direction: column;
}
.pagescroll .thumb i {
  width: 4px;
  height: 2px;
}

/* status bar */
footer {
  display: flex;
  align-items: flex-start;
  justify-content: flex-end;
  height: 30px;
  padding-left: 620px;
}
.logo {
  margin: 3px auto 0 0;
}
.logo text {
  font: bold 14px "Liberation Sans", sans-serif;
  fill: #fff;
}
.status {
  display: flex;
  align-items: center;
  gap: 6px;
  height: 26px;
}
.status .sep {
  height: 12px;
}
.status button {
  display: flex;
  align-items: center;
  gap: 6px;
}
.empty {
  width: 12px;
}
.tabkey {
  margin: 0 4px;
}
.grip {
  align-self: flex-end;
  margin: 0 3px 0 11px;
}
```
